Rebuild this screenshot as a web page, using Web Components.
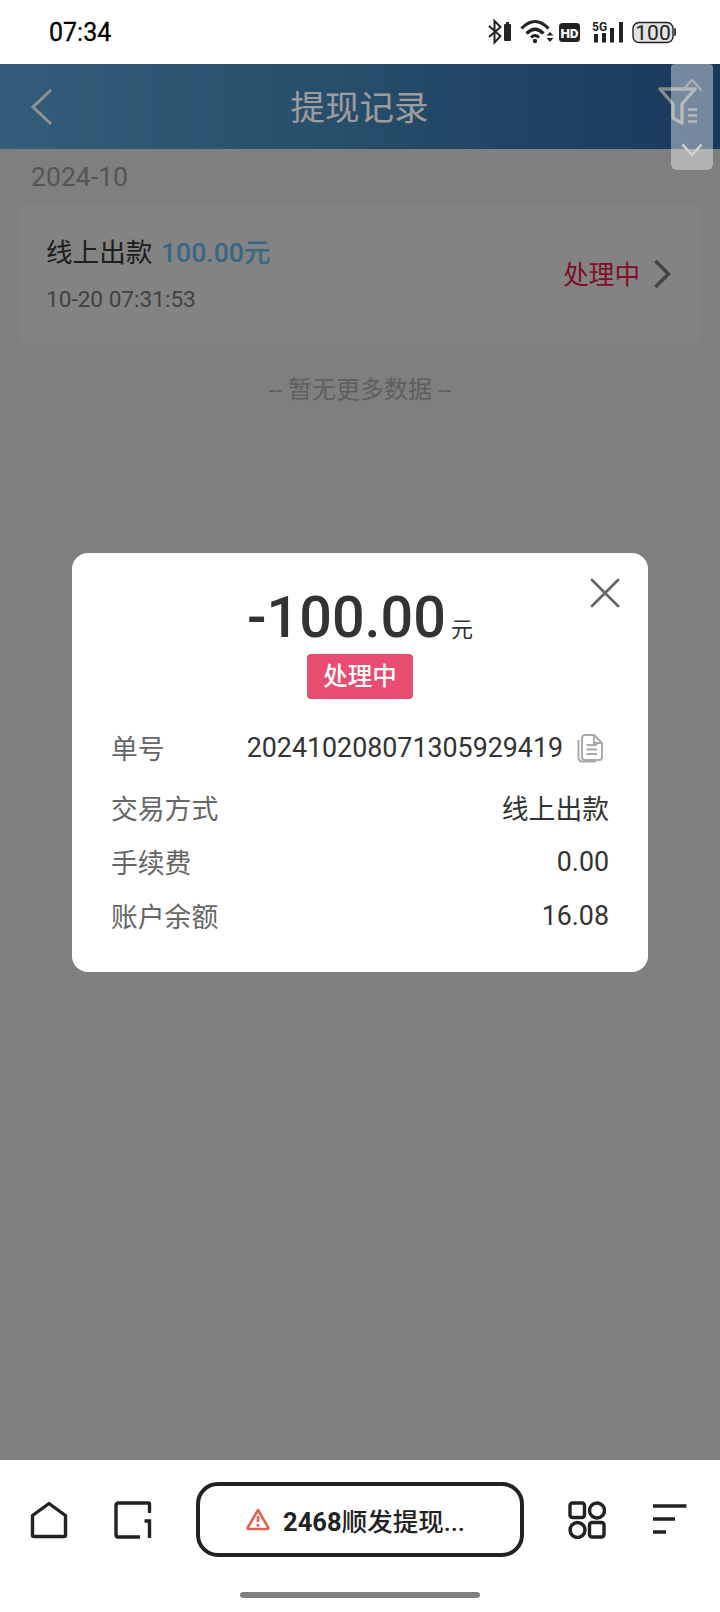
<!DOCTYPE html>
<html lang="zh">
<head>
<meta charset="utf-8">
<title>提现记录</title>
<style>
  html, body { margin: 0; padding: 0; }
  body {
    width: 720px;
    height: 1612px;
    overflow: hidden;
    display: flex;
    flex-direction: column;
    background: #fff;
    font-family: Roboto, "Noto Sans CJK SC", sans-serif;
  }
  .screen { position: relative; flex: 1; min-height: 0; display: flex; flex-direction: column; background: #c3c3c5; }
</style>
</head>
<body>
  <status-bar time="07:34"></status-bar>

  <div class="screen">
    <page-header title="提现记录"></page-header>
    <record-list month="2024-10">
      <record-card method="线上出款" amount="100.00元" time="10-20 07:31:53" state="处理中"></record-card>
    </record-list>

    <detail-dialog amount="-100.00" unit="元" state="处理中">
      <detail-row label="单号" copy>202410208071305929419</detail-row>
      <detail-row label="交易方式">线上出款</detail-row>
      <detail-row label="手续费">0.00</detail-row>
      <detail-row label="账户余额">16.08</detail-row>
    </detail-dialog>

    <scroll-handle></scroll-handle>
  </div>

  <bottom-nav label="2468" name="顺发提现..."></bottom-nav>

<script>
  class StatusBar extends HTMLElement {
    constructor() {
      super();
      this.attachShadow({mode: 'open'});
      this.shadowRoot.innerHTML = `
        <style>
          :host { display: flex; align-items: center; height: 64px; padding: 0 43px 0 49px; background: #fff; color: #000; box-sizing: border-box; }
          .time { font: 400 25px/1 Roboto, sans-serif; flex: 1; -webkit-text-stroke: .3px #000; }
          .icons { display: flex; align-items: center; height: 64px; }
          svg { display: block; }
          .fiveg { font: 700 12px/1 Roboto, sans-serif; }
          .pct { font: 400 21px/1 Roboto, sans-serif; }
        </style>
        <span class="time">${this.getAttribute('time')}</span>
        <div class="icons">
          <svg width="192" height="30" viewBox="0 0 192 30">
            <!-- x origin is 482 on the page, y origin is 17 -->
            <path d="M5 9 L16.500 19 L10.500 25.500 V4 L16.500 10 L5 20" fill="none" stroke="#222" stroke-width="2"/>
            <rect x="20" y="7" width="7" height="17" rx="1" fill="#222"/>
            <rect x="22" y="5" width="3" height="2" fill="#222"/>

            <path d="M37.500 11.500 Q51 -2.500 64.500 11.500" fill="none" stroke="#222" stroke-width="3.200"/>
            <path d="M42.500 16.500 Q51 8 59.500 16.500" fill="none" stroke="#222" stroke-width="3.200"/>
            <path d="M47 20.500 Q51 16.500 55 20.500" fill="none" stroke="#222" stroke-width="2.800"/>
            <circle cx="51" cy="24" r="2.200" fill="#222"/>
            <path d="M62.500 18.500 L66 15 L69.500 18.500 Z M62.500 21 L66 25 L69.500 21 Z" fill="#222"/>

            <rect x="75" y="6" width="21" height="19" rx="3.500" fill="#222"/>
            <text x="85.500" y="20.500" text-anchor="middle" font-family="Roboto" font-weight="900" font-size="13.500" fill="#fff">HD</text>

            <text x="108" y="14" class="fiveg" fill="#222">5G</text>
            <rect x="110" y="17" width="4" height="8.500" fill="#222"/>
            <rect x="118" y="16" width="4" height="9.500" fill="#222"/>
            <rect x="126" y="11" width="4" height="14.500" fill="#222"/>
            <rect x="135" y="5" width="4" height="20.500" fill="#222"/>

            <rect x="149" y="5.500" width="40" height="20" rx="6" fill="#e2e2e2" stroke="#222" stroke-width="1.400"/>
            <text x="169" y="23" text-anchor="middle" class="pct" fill="#222">100</text>
          </svg>
          <svg width="3" height="8" viewBox="0 0 3 8" style="margin-left:-2px"><rect x="0" y="0" width="2" height="8" rx="1" fill="#444"/></svg>
        </div>
      `;
    }
  }

  class PageHeader extends HTMLElement {
    constructor() {
      super();
      this.attachShadow({mode: 'open'});
      this.shadowRoot.innerHTML = `
        <style>
          :host { display: flex; align-items: center; justify-content: space-between; height: 85px; padding: 0 20px 0 30px; box-sizing: border-box;
                  background: linear-gradient(90deg, #4f8fbc 0%, #3d7aa6 45%, #28588f 100%); color: #f0f0f0; }
          h1 { margin: 0 0 3px 7px; font: 400 34.500px/1 "Noto Sans CJK SC", sans-serif; }
          svg { display: block; }
        </style>
        <svg width="24" height="40" viewBox="0 0 24 40"><path d="M21 3 L3 20 L21 37" fill="none" stroke="#e0e0e0" stroke-width="3"/></svg>
        <h1>${this.getAttribute('title')}</h1>
        <svg width="42" height="42" viewBox="0 0 42 42">
          <path d="M2 3 H37 L24 18 V37 L15 32 V18 Z" fill="none" stroke="#d0d4d8" stroke-width="3.400" stroke-linejoin="round"/>
          <path d="M30 23.500 H39 M30 29.500 H39 M30 35.500 H39" stroke="#d0d4d8" stroke-width="2.600"/>
        </svg>
      `;
    }
  }

  class RecordList extends HTMLElement {
    constructor() {
      super();
      this.attachShadow({mode: 'open'});
      this.shadowRoot.innerHTML = `
        <style>
          :host { display: block; padding: 0 19px; font-family: Roboto, "Noto Sans CJK SC", sans-serif; }
          .month { padding-left: 12px; height: 55px; line-height: 56px; font-size: 26.600px; color: #838383; }
          .end { margin-top: 29px; text-align: center; font-size: 24px; line-height: 36px; color: #929292; }
        </style>
        <div class="month">${this.getAttribute('month')}</div>
        <slot></slot>
        <div class="end">-- 暂无更多数据 --</div>
      `;
    }
  }

  class RecordCard extends HTMLElement {
    constructor() {
      super();
      this.attachShadow({mode: 'open'});
      this.shadowRoot.innerHTML = `
        <style>
          :host { display: flex; align-items: center; height: 139px; padding: 0 30px 0 27px; box-sizing: border-box; background: #c9c9c9; border-radius: 8px; }
          .info { flex: 1; padding-top: 3px; }
          .head { font-size: 26.600px; line-height: 36px; color: #2e2e2e; }
          .head b { font-weight: 500; color: #569fcc; margin-left: 2px; }
          .time { font-size: 22.600px; line-height: 30px; margin-top: 14px; color: #666; }
          .state { font-size: 25.600px; color: #c31738; margin: -2px 13px 0 0; }
          svg { display: block; }
        </style>
        <div class="info">
          <div class="head">${this.getAttribute('method')} <b>${this.getAttribute('amount')}</b></div>
          <div class="time">${this.getAttribute('time')}</div>
        </div>
        <span class="state">${this.getAttribute('state')}</span>
        <svg width="18" height="30" viewBox="0 0 18 30"><path d="M2.500 2 L15.500 15 L2.500 28" fill="none" stroke="#696969" stroke-width="3.600"/></svg>
      `;
    }
  }

  class DetailDialog extends HTMLElement {
    constructor() {
      super();
      this.attachShadow({mode: 'open'});
      this.shadowRoot.innerHTML = `
        <style>
          :host { position: absolute; inset: 0; display: flex; align-items: center; justify-content: center; background: rgba(0,0,0,.35); }
          .box { position: relative; width: 576px; height: 419px; box-sizing: border-box; padding: 32px 39px 0; background: #fff; border-radius: 16px;
                 font-family: Roboto, "Noto Sans CJK SC", sans-serif; }
          .close { position: absolute; top: 25px; right: 28px; display: block; }
          .amount { display: flex; justify-content: center; align-items: baseline; gap: 5px; color: #333; height: 66px; line-height: 66px; }
          .amount b { font-size: 57.500px; font-weight: 500; }
          .amount span { font-size: 22px; }
          .badge-wrap { display: flex; justify-content: center; margin-top: 3px; }
          .badge { width: 106px; height: 45px; line-height: 45px; text-align: center; background: #e94d71; color: #fff; font-size: 24.500px; font-weight: 500; border-radius: 4px; }
          .rows { margin-top: 22px; display: flex; flex-direction: column; }
        </style>
        <div class="box">
          <svg class="close" width="30" height="30" viewBox="0 0 30 30"><path d="M2 2 L28 28 M28 2 L2 28" stroke="#666" stroke-width="2.800" stroke-linecap="round"/></svg>
          <div class="amount"><b>${this.getAttribute('amount')}</b><span>${this.getAttribute('unit')}</span></div>
          <div class="badge-wrap"><div class="badge">${this.getAttribute('state')}</div></div>
          <div class="rows"><slot></slot></div>
        </div>
      `;
    }
  }

  class DetailRow extends HTMLElement {
    constructor() {
      super();
      this.attachShadow({mode: 'open'});
      const copy = this.hasAttribute('copy') ? `
        <svg class="copy" width="28" height="30" viewBox="0 0 28 30">
          <path d="M6 23 V5 a3 3 0 0 1 3-3 H18 L26 10 V24 a3 3 0 0 1-3 3 H9 a3 3 0 0 1-3-3 Z" fill="none" stroke="#aaa" stroke-width="2"/>
          <path d="M2.500 7 V25 a3.500 3.500 0 0 0 3.500 3.500 H20" fill="none" stroke="#aaa" stroke-width="2"/>
          <path d="M10.500 12 H21 M10.500 16.500 H21 M10.500 21 H21" stroke="#aaa" stroke-width="2"/>
          <path d="M18 2 V10 H26" fill="none" stroke="#aaa" stroke-width="1.800"/>
        </svg>` : '';
      this.shadowRoot.innerHTML = `
        <style>
          :host { display: flex; align-items: center; justify-content: space-between; height: 54px; box-sizing: border-box; font-size: 26.800px; color: #333; }
          :host([copy]) { height: 60px; padding-bottom: 6px; }
          .label { color: #666; flex: 1; }
          .copy { display: block; margin-left: 13px; margin-right: 5px; }
        </style>
        <span class="label">${this.getAttribute('label')}</span>
        <span><slot></slot></span>
        ${copy}
      `;
    }
  }

  class ScrollHandle extends HTMLElement {
    constructor() {
      super();
      this.attachShadow({mode: 'open'});
      this.shadowRoot.innerHTML = `
        <style>
          :host { position: absolute; top: 0; right: 7px; width: 42px; height: 106px; box-sizing: border-box; background: rgba(255,255,255,.4); border-radius: 4px 4px 6px 6px;
                  display: flex; flex-direction: column; align-items: center; justify-content: space-between; padding: 14px 0 13px; }
          svg { display: block; }
        </style>
        <svg width="22" height="14" viewBox="0 0 22 14"><path d="M1.500 12.500 L11 2 L20.500 12.500" fill="none" stroke="#aab0b6" stroke-width="2.400"/></svg>
        <svg width="22" height="14" viewBox="0 0 22 14"><path d="M1.500 1.500 L11 12 L20.500 1.500" fill="none" stroke="#d4d4d4" stroke-width="2.400"/></svg>
      `;
    }
  }

  class BottomNav extends HTMLElement {
    constructor() {
      super();
      this.attachShadow({mode: 'open'});
      this.shadowRoot.innerHTML = `
        <style>
          :host { display: block; height: 152px; background: #fff; box-sizing: border-box; padding-top: 22px; font-family: Roboto, "Noto Sans CJK SC", sans-serif; color: #222; }
          .bar { display: flex; align-items: center; height: 75px; padding-left: 30px; }
          svg { display: block; flex: none; }
          .home { margin-right: 46px; }
          .tab { margin-right: 43.500px; }
          .pill { width: 328px; height: 75px; box-sizing: border-box; border: 4px solid #222; border-radius: 22px; display: flex; align-items: center; justify-content: center; gap: 13px; padding-right: 8px; margin-right: 44.500px; font-size: 25.500px; font-weight: 500; white-space: nowrap; }
          .pill b { font-weight: 700; }
          .grid { margin-right: 47px; }
          .indicator { width: 240px; height: 6px; margin: 35px auto 0; background: #808080; border-radius: 3px; }
        </style>
        <div class="bar">
          <svg class="home" width="38" height="38" viewBox="0 0 38 38"><path d="M2.500 14.500 L19 2.500 L35.500 14.500 V34 a1.500 1.500 0 0 1-1.500 1.500 H4 a1.500 1.500 0 0 1-1.500-1.500 Z" fill="none" stroke="#222" stroke-width="3.400" stroke-linejoin="round"/></svg>
          <svg class="tab" width="38" height="38" viewBox="0 0 38 38">
            <path d="M35.500 12 V3 a1 1 0 0 0-1-1 H4 a2 2 0 0 0-2 2 V34 a2 2 0 0 0 2 2 H26" fill="none" stroke="#222" stroke-width="3.400"/>
            <path d="M30.500 20 H35.500 V37" fill="none" stroke="#222" stroke-width="3.400"/>
          </svg>
          <div class="pill">
            <svg width="24" height="23" viewBox="0 0 24 23"><path d="M12 2 L22.500 20 a1 1 0 0 1-1 1 H2.500 a1 1 0 0 1-1-1 Z" fill="none" stroke="#e5604f" stroke-width="2.600" stroke-linejoin="round"/><path d="M12 8 V14" stroke="#e5604f" stroke-width="2.600"/><circle cx="12" cy="17.300" r="1.500" fill="#e5604f"/></svg>
            <span><b>${this.getAttribute('label')}</b>${this.getAttribute('name')}</span>
          </div>
          <svg class="grid" width="38" height="38" viewBox="0 0 38 38">
            <rect x="2" y="2" width="14.500" height="14.500" rx="2.500" fill="none" stroke="#222" stroke-width="3.400"/>
            <circle cx="29" cy="9.500" r="7.500" fill="none" stroke="#222" stroke-width="3.400"/>
            <circle cx="9.500" cy="29" r="7.500" fill="none" stroke="#222" stroke-width="3.400"/>
            <rect x="21.500" y="21.500" width="14.500" height="14.500" rx="2.500" fill="none" stroke="#222" stroke-width="3.400"/>
          </svg>
          <svg width="34" height="32" viewBox="0 0 34 32"><path d="M0 2 H33.500 M0 15 H22 M0 28 H13" stroke="#222" stroke-width="3.500"/></svg>
        </div>
        <div class="indicator"></div>
      `;
    }
  }

  customElements.define('status-bar', StatusBar);
  customElements.define('page-header', PageHeader);
  customElements.define('record-list', RecordList);
  customElements.define('record-card', RecordCard);
  customElements.define('detail-dialog', DetailDialog);
  customElements.define('detail-row', DetailRow);
  customElements.define('scroll-handle', ScrollHandle);
  customElements.define('bottom-nav', BottomNav);
</script>
</body>
</html>
